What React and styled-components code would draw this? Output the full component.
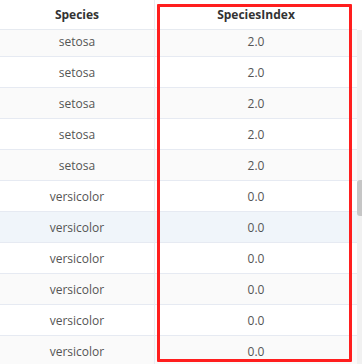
import React from "react";
import styled, { createGlobalStyle } from "styled-components";

const Global = createGlobalStyle`
  html, body { margin: 0; padding: 0; background: #fff; }
  body { width: 362px; height: 364px; overflow: hidden; font-family: "Open Sans", "Noto Sans", sans-serif; }
`;

const Frame = styled.div`
  position: relative;
  width: 362px;
  height: 364px;
  display: flex;
  overflow: hidden;
  background: #fff;
`;

const TableArea = styled.div`
  width: 357px;
  display: flex;
  flex-direction: column;
`;

const Header = styled.div`
  display: grid;
  grid-template-columns: 155px 202px;
  height: 29px;
  border-bottom: 1px solid #e6eaf0;
  background: #fff;
  position: relative;
  z-index: 1;
`;

const HeadCell = styled.div`
  display: flex;
  align-items: center;
  justify-content: center;
  font-size: 12px;
  font-weight: 700;
  color: #333;
  border-right: ${(p) => (p.$divider ? "1px solid #e9edf2" : "none")};
`;

const Body = styled.div`
  flex: 1;
  overflow: hidden;
`;

const Rows = styled.div`
  margin-top: -4px;
`;

const Row = styled.div`
  display: grid;
  grid-template-columns: 155px 202px;
  height: 30px;
  border-bottom: 1px solid #e6eaf2;
  background: ${(p) => (p.$hover ? "#f0f5fa" : p.$odd ? "#fafafa" : "#fff")};
`;

const Cell = styled.div`
  display: flex;
  align-items: center;
  justify-content: center;
  font-size: 12px;
  color: #555;
  border-right: ${(p) => (p.$divider ? "1px solid #e9edf2" : "none")};
`;

const Track = styled.div`
  width: 5px;
  display: flex;
  flex-direction: column;
`;

const TrackTop = styled.div`
  height: 30px;
  background: #fff;
`;

const TrackBody = styled.div`
  flex: 1;
  background: #f1f1f1;
  padding-top: 150px;
`;

const Thumb = styled.div`
  width: 5px;
  height: 36px;
  border-radius: 3px 0 0 3px;
  background: #c6c6c6;
`;

const Highlight = styled.div`
  position: absolute;
  z-index: 5;
  left: 157px;
  top: 4px;
  width: 189px;
  height: 352px;
  border: 3px solid #ff1e1e;
  border-radius: 1px;
  pointer-events: none;
`;

const data = [
  ["setosa", "2.0"],
  ["setosa", "2.0"],
  ["setosa", "2.0"],
  ["setosa", "2.0"],
  ["setosa", "2.0"],
  ["versicolor", "0.0"],
  ["versicolor", "0.0"],
  ["versicolor", "0.0"],
  ["versicolor", "0.0"],
  ["versicolor", "0.0"],
  ["versicolor", "0.0"],
];

export default function App() {
  return (
    <>
      <Global />
      <Frame>
        <TableArea>
          <Header>
            <HeadCell $divider>Species</HeadCell>
            <HeadCell>SpeciesIndex</HeadCell>
          </Header>
          <Body>
            <Rows>
              {data.map(([s, i], idx) => (
                <Row key={idx} $odd={idx % 2 === 0} $hover={idx === 6}>
                  <Cell $divider>{s}</Cell>
                  <Cell>{i}</Cell>
                </Row>
              ))}
            </Rows>
          </Body>
        </TableArea>
        <Track>
          <TrackTop />
          <TrackBody>
            <Thumb />
          </TrackBody>
        </Track>
        <Highlight />
      </Frame>
    </>
  );
}
